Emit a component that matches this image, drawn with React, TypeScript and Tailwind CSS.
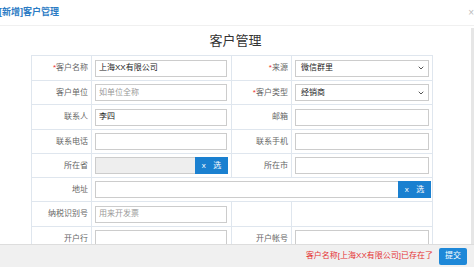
import { ChevronDown } from 'lucide-react';

const font = { fontFamily: '"Liberation Sans", "Noto Sans CJK SC", sans-serif' };

function Label({ text, required }: { text?: string; required?: boolean }) {
  return (
    <td className="w-[60px] border border-[#dfe6ee] pr-[3px] text-right text-[8px] text-[#666]">
      {required && <span className="text-[#e33]">*</span>}
      {text}
    </td>
  );
}

function Input({ value, placeholder, wide }: { value?: string; placeholder?: string; wide?: boolean }) {
  return (
    <div
      className={`flex h-[17px] items-center border border-[#ccc] bg-white px-[3px] text-[8px] ${
        wide ? 'w-[134px]' : 'w-[132px]'
      } ${value ? 'text-[#222]' : 'text-[#999]'}`}
    >
      {value || placeholder}
    </div>
  );
}

function Select({ value }: { value: string }) {
  return (
    <div className="flex h-[17px] w-[134px] items-center justify-between border border-[#ccc] bg-white pl-[5px] pr-[3px] text-[8px] text-[#222]">
      <span>{value}</span>
      <ChevronDown className="h-[8px] w-[8px] text-[#555]" strokeWidth={3} />
    </div>
  );
}

function PickButton() {
  return (
    <div className="flex h-[17px] w-[33px] items-center justify-around bg-[#1a80d0] px-[3px] text-[8px] text-white">
      <span>x</span>
      <span>选</span>
    </div>
  );
}

function Cell({ children, colSpan }: { children?: React.ReactNode; colSpan?: number }) {
  return (
    <td colSpan={colSpan} className="border border-[#dfe6ee] pl-[3px]">
      {children}
    </td>
  );
}

export default function App() {
  return (
    <div className="flex h-[267px] w-[474px] flex-col overflow-hidden bg-white" style={font}>
      <div className="flex h-[26px] shrink-0 items-center justify-between border-b border-[#f0f0f0]">
        <span className="-ml-[1px] text-[9px] font-bold text-[#2b7bc4]">[新增]客户管理</span>
        <span className="text-[10px] text-[#bbb]">×</span>
      </div>
      <div className="flex min-h-0 flex-1">
        <div className="flex-1 overflow-hidden">
          <div className="pt-[5px] text-center text-[13px] leading-[20px] text-[#333]">客户管理</div>
          <table className="ml-[31px] mt-[4px] w-[402px] border-collapse">
            <tbody>
              <tr className="h-[25px]">
                <Label text="客户名称" required />
                <Cell>
                  <Input value="上海XX有限公司" />
                </Cell>
                <Label text="来源" required />
                <Cell>
                  <Select value="微信群里" />
                </Cell>
              </tr>
              <tr className="h-[24px]">
                <Label text="客户单位" />
                <Cell>
                  <Input placeholder="如单位全称" />
                </Cell>
                <Label text="客户类型" required />
                <Cell>
                  <Select value="经销商" />
                </Cell>
              </tr>
              <tr className="h-[25px]">
                <Label text="联系人" />
                <Cell>
                  <Input value="李四" />
                </Cell>
                <Label text="邮箱" />
                <Cell>
                  <Input wide />
                </Cell>
              </tr>
              <tr className="h-[24px]">
                <Label text="联系电话" />
                <Cell>
                  <Input />
                </Cell>
                <Label text="联系手机" />
                <Cell>
                  <Input wide />
                </Cell>
              </tr>
              <tr className="h-[24px]">
                <Label text="所在省" />
                <Cell>
                  <div className="flex">
                    <div className="h-[17px] w-[100px] border border-r-0 border-[#ccc] bg-[#eee]" />
                    <PickButton />
                  </div>
                </Cell>
                <Label text="所在市" />
                <Cell>
                  <Input wide />
                </Cell>
              </tr>
              <tr className="h-[24px]">
                <Label text="地址" />
                <Cell colSpan={3}>
                  <div className="flex">
                    <div className="h-[17px] w-[303px] border border-r-0 border-[#ccc] bg-white" />
                    <PickButton />
                  </div>
                </Cell>
              </tr>
              <tr className="h-[25px]">
                <Label text="纳税识别号" />
                <Cell>
                  <Input placeholder="用来开发票" />
                </Cell>
                <Label />
                <Cell />
              </tr>
              <tr className="h-[24px]">
                <Label text="开户行" />
                <Cell>
                  <Input />
                </Cell>
                <Label text="开户帐号" />
                <Cell>
                  <Input wide />
                </Cell>
              </tr>
            </tbody>
          </table>
        </div>
        <div className="mt-[2px] w-[3px] bg-[#e6e6e6]" />
      </div>
      <div className="flex h-[23px] shrink-0 items-center justify-end gap-[6px] border-t border-[#ddd] bg-[#f0f0f0] pr-[7px]">
        <span className="text-[8px] text-[#e53333]">客户名称[上海XX有限公司]已存在了</span>
        <div className="flex h-[17px] w-[28px] items-center justify-center rounded-[2px] bg-[#1e88d8] text-[8px] text-white">
          提交
        </div>
      </div>
    </div>
  );
}
